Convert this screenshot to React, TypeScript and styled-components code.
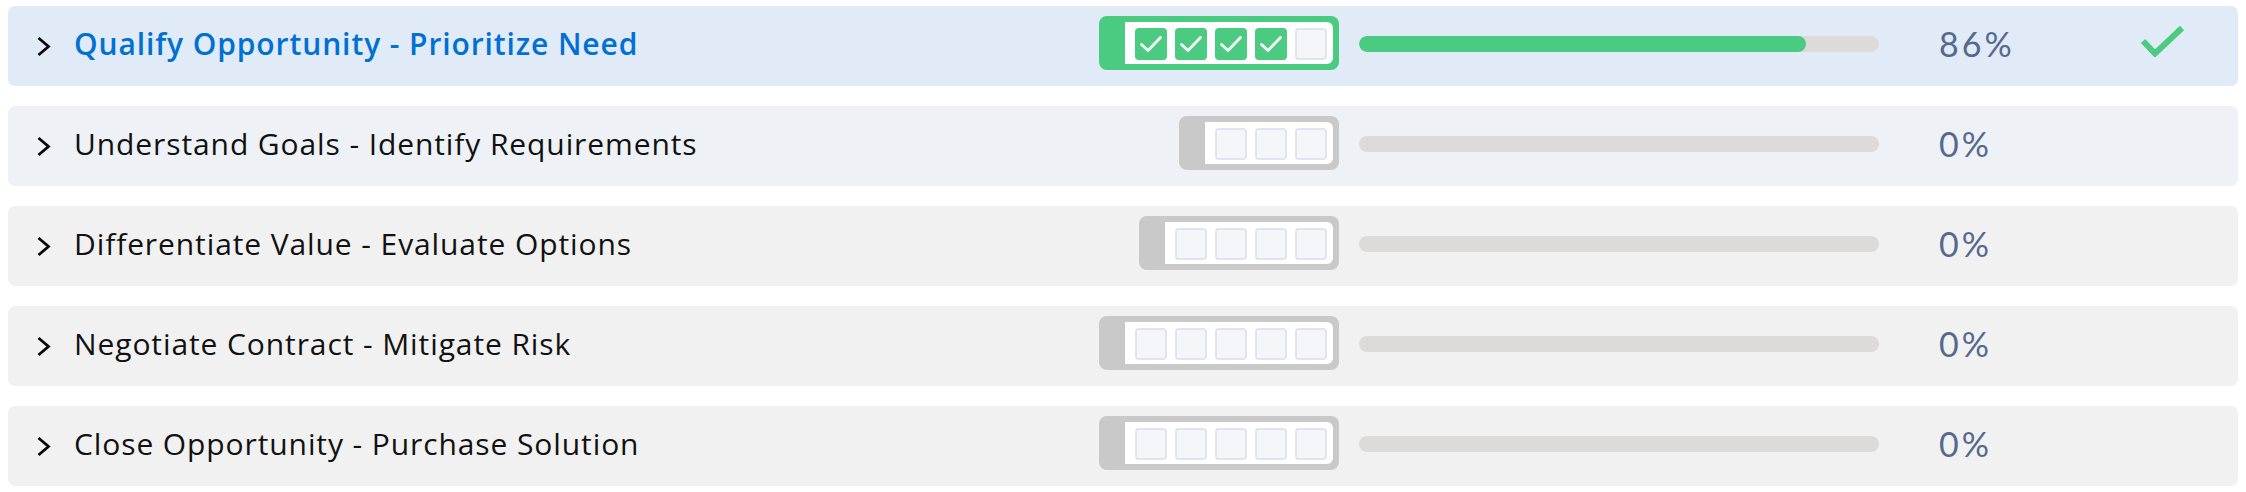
import React from "react";
import styled, { createGlobalStyle } from "styled-components";

const Global = createGlobalStyle`
  html, body { margin: 0; padding: 0; background: #ffffff; }
  body { font-family: "Open Sans", "Noto Sans", Arial, sans-serif; }
`;

const List = styled.div`
  display: flex;
  flex-direction: column;
  gap: 20px;
  padding: 6px 8px;
`;

type Tone = "active" | "blue" | "gray";

const bgFor: Record<Tone, string> = {
  active: "#e1ebf7",
  blue: "#eef1f6",
  gray: "#f1f1f1",
};

const Row = styled.div<{ $tone: Tone }>`
  display: flex;
  align-items: center;
  height: 80px;
  box-sizing: border-box;
  padding: 10px 53px 16px 28px;
  border-radius: 7px;
  background: ${(p) => bgFor[p.$tone]};
`;

const Chevron = styled.svg`
  flex: none;
  width: 15px;
  height: 21px;
  margin-top: 6px;
`;

const Title = styled.div<{ $active: boolean }>`
  flex: 1;
  margin-left: 23px;
  font-family: "Open Sans", "Noto Sans", Arial, sans-serif;
  font-size: 30px;
  letter-spacing: 0.9px;
  font-weight: ${(p) => (p.$active ? 600 : 400)};
  color: ${(p) => (p.$active ? "#0070d2" : "#111111")};
  white-space: nowrap;
`;

const Tracker = styled.div<{ $done: boolean }>`
  flex: none;
  display: flex;
  padding: 6px 6px 6px 26px;
  border-radius: 8px;
  background: ${(p) => (p.$done ? "#4bca81" : "#c9c9c9")};
`;

const TrackerInner = styled.div`
  display: flex;
  gap: 8px;
  padding: 6px 6px 4px 10px;
  background: #ffffff;
  border-radius: 0 6px 6px 0;
`;

const Box = styled.div<{ $checked: boolean }>`
  width: 32px;
  height: 32px;
  box-sizing: border-box;
  border-radius: 4px;
  display: flex;
  align-items: center;
  justify-content: center;
  background: ${(p) => (p.$checked ? "#4bca81" : "#f4f6f9")};
  border: 2px solid ${(p) => (p.$checked ? "#4bca81" : "#dfe4ee")};
`;

const Bar = styled.div`
  flex: none;
  width: 520px;
  height: 16px;
  margin-left: 20px;
  margin-top: 2px;
  border-radius: 8px;
  background: #dddbda;
  overflow: hidden;
`;

const Fill = styled.div`
  height: 100%;
  border-radius: 8px;
  background: #4bca81;
`;

const Percent = styled.div`
  flex: none;
  width: 201px;
  margin-left: 60px;
  font-family: Lato, "Open Sans", sans-serif;
  font-size: 34px;
  letter-spacing: 3px;
  color: #54698d;
`;

const DoneSlot = styled.div`
  flex: none;
  width: 45px;
  height: 32px;
  display: flex;
  margin-top: -4px;
`;

const SmallCheck = () => (
  <svg width="24" height="18" viewBox="0 0 24 18">
    <polyline
      points="2.5,9.5 9,15.5 21.5,2.5"
      fill="none"
      stroke="#f4f4f4"
      strokeWidth="3"
      strokeLinecap="round"
      strokeLinejoin="round"
    />
  </svg>
);

const BigCheck = () => (
  <svg width="45" height="32" viewBox="0 0 45 32">
    <polyline
      points="3,16 15,28.5 42,3"
      fill="none"
      stroke="#4bca81"
      strokeWidth="6"
      strokeLinejoin="miter"
    />
  </svg>
);

type Stage = {
  title: string;
  total: number;
  done: number;
  pct: number;
  tone: Tone;
};

const stages: Stage[] = [
  { title: "Qualify Opportunity - Prioritize Need", total: 5, done: 4, pct: 86, tone: "active" },
  { title: "Understand Goals - Identify Requirements", total: 3, done: 0, pct: 0, tone: "blue" },
  { title: "Differentiate Value - Evaluate Options", total: 4, done: 0, pct: 0, tone: "gray" },
  { title: "Negotiate Contract - Mitigate Risk", total: 5, done: 0, pct: 0, tone: "gray" },
  { title: "Close Opportunity - Purchase Solution", total: 5, done: 0, pct: 0, tone: "gray" },
];

export default function App() {
  return (
    <>
      <Global />
      <List>
        {stages.map((s) => {
          const active = s.tone === "active";
          return (
            <Row key={s.title} $tone={s.tone}>
              <Chevron viewBox="0 0 15 21">
                <polyline
                  points="2.5,2 12.5,10.5 2.5,19"
                  fill="none"
                  stroke="#080707"
                  strokeWidth="2.8"
                />
              </Chevron>
              <Title $active={active}>{s.title}</Title>
              <Tracker $done={active}>
                <TrackerInner>
                  {Array.from({ length: s.total }).map((_, i) => (
                    <Box key={i} $checked={i < s.done}>
                      {i < s.done && <SmallCheck />}
                    </Box>
                  ))}
                </TrackerInner>
              </Tracker>
              <Bar>
                <Fill style={{ width: `${s.pct}%` }} />
              </Bar>
              <Percent>{s.pct}%</Percent>
              <DoneSlot>{active && <BigCheck />}</DoneSlot>
            </Row>
          );
        })}
      </List>
    </>
  );
}
